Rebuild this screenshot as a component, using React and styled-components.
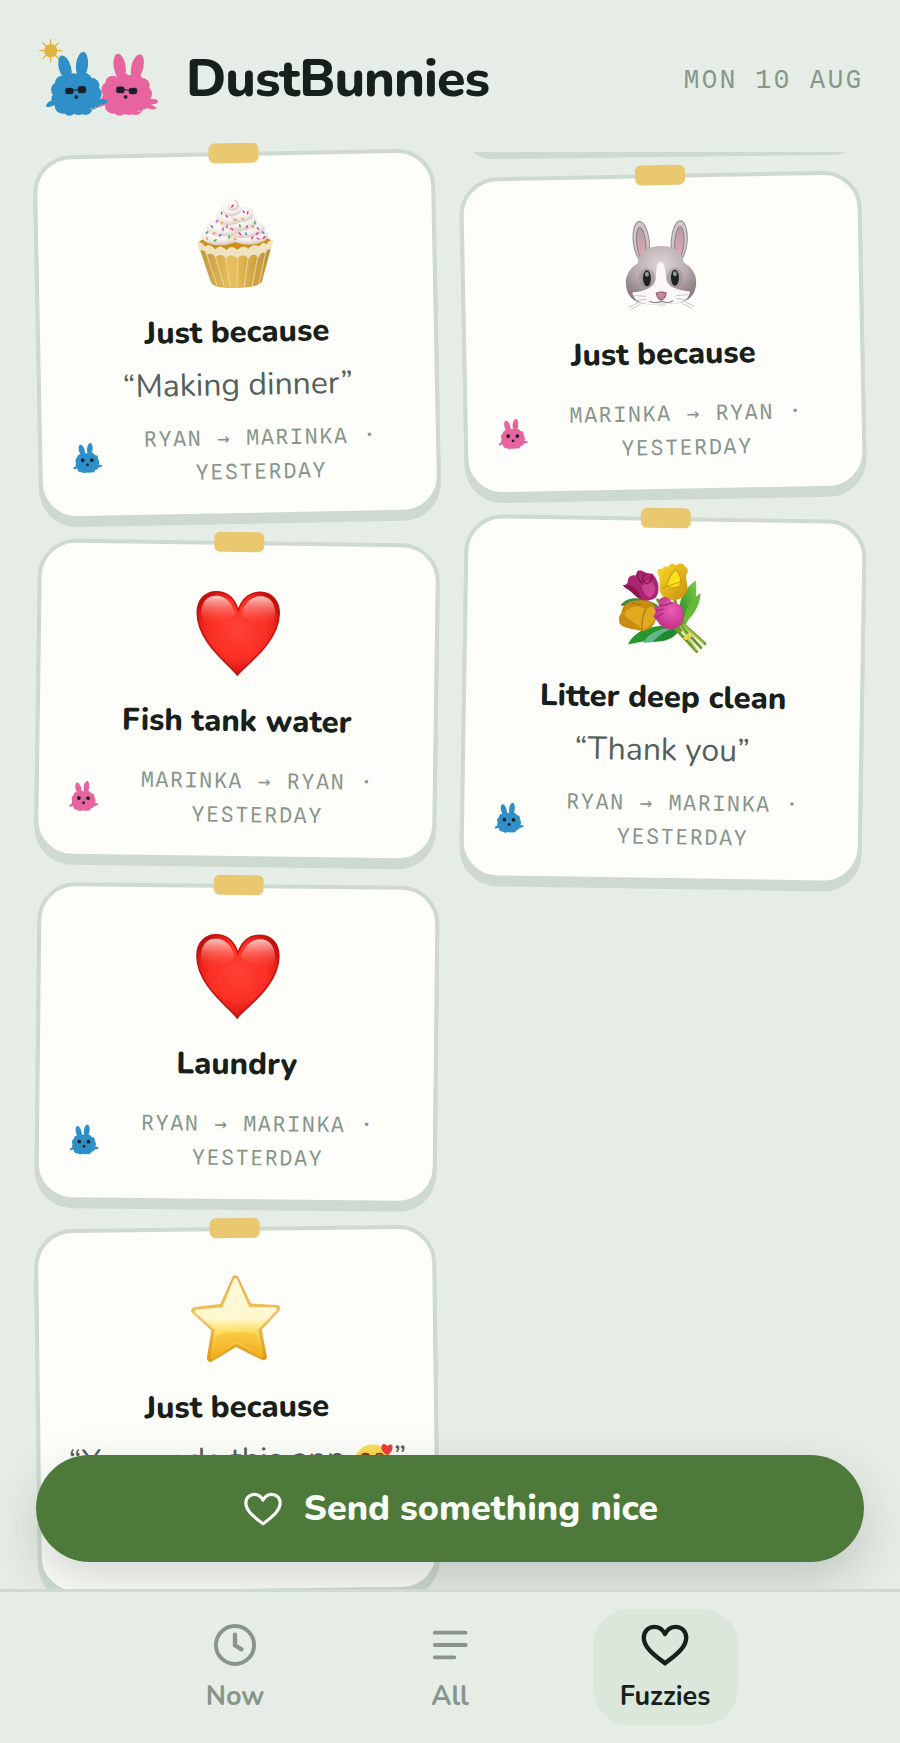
import React from 'react';
import styled, { createGlobalStyle } from 'styled-components';


const GlobalStyle = createGlobalStyle`
  * {
    box-sizing: border-box;
  }

  body {
    margin: 0;
    background-color: #e6ede6;
    color: #18201b;
    font-family: "Nunito", "Lato", sans-serif;
  }
`;

const Shell = styled.div`
  height: 100vh;
  display: flex;
  flex-direction: column;
  overflow: hidden;
`;

const Header = styled.header`
  display: flex;
  align-items: center;
  gap: 28px;
  padding: 39px 36px 17px;
`;

const Logo = styled.svg`
  width: 122px;
  height: 80px;
  flex: none;
`;

const Brand = styled.h1`
  margin: 0;
  flex: 1;
  font-size: 52px;
  line-height: 64px;
  font-weight: 800;
  letter-spacing: -1px;
`;

const Today = styled.time`
  font-family: "Spline Sans Mono", "Roboto Mono", "DejaVu Sans Mono", monospace;
  font-size: 25px;
  line-height: 34px;
  letter-spacing: 3px;
  text-transform: uppercase;
  color: #87958b;
`;

const Stage = styled.main`
  position: relative;
  flex: 1;
  min-height: 0;
  overflow: hidden;
`;

const Board = styled.div`
  height: 100%;
  padding: 16px 36px 0;
  display: grid;
  grid-template-columns: 1fr 1fr;
  align-items: start;
  gap: 24px;
`;

const Column = styled.div`
  min-width: 0;
  display: flex;
  flex-direction: column;
  gap: 24px;
`;

const Card = styled.article`
  position: relative;
  padding: 42px 28px 24px;
  border: 4px solid #cedad0;
  border-radius: 38px;
  background-color: #fdfefa;
  box-shadow: 0 7px 0 #cedad0;
  text-align: center;
  transform: rotate(${(props) => props.$tilt}deg);
`;

const Tape = styled.span`
  position: absolute;
  top: -13px;
  left: 50%;
  width: 50px;
  height: 20px;
  margin-left: -25px;
  border-radius: 6px;
  background-color: #e9c870;
`;

const Carry = styled.div`
  height: 8px;
  margin-bottom: -10px;
  overflow: hidden;

  &::before {
    content: '';
    display: block;
    height: 80px;
    margin-top: -75px;
    border-radius: 30px;
    background-color: #cedad0;
    transform: rotate(-0.7deg);
  }
`;

const Sticker = styled.svg`
  display: block;
  width: 92px;
  height: 92px;
  margin: 0 auto 22px;
  overflow: visible;
`;

const Title = styled.h2`
  margin: 0 0 16px;
  font-size: 31px;
  line-height: 40px;
  font-weight: 800;
`;

const Quote = styled.p`
  margin: 0 0 12px;
  font-size: 32px;
  line-height: 34px;
  white-space: nowrap;
  color: #56605a;
`;

const Meta = styled.div`
  display: flex;
  align-items: center;
  gap: 10px;
  margin-top: 23px;

  ${Quote} + & {
    margin-top: 19px;
  }
`;

const Avatar = styled.svg`
  width: 34px;
  height: 34px;
  flex: none;
`;

const MetaText = styled.p`
  margin: 0;
  flex: 1;
  font-family: "Spline Sans Mono", "Roboto Mono", "DejaVu Sans Mono", monospace;
  font-size: 21px;
  line-height: 34px;
  letter-spacing: 2px;
  text-transform: uppercase;
  color: #87958b;
`;

const InlineFace = styled.svg`
  width: 40px;
  height: 40px;
  margin: -6px 0;
  vertical-align: -8px;
`;

const SendButton = styled.button`
  position: absolute;
  left: 36px;
  right: 36px;
  bottom: 27px;
  height: 107px;
  display: flex;
  align-items: center;
  justify-content: center;
  gap: 20px;
  border: 0;
  border-radius: 54px;
  background-color: #4d7a3a;
  color: #fafdf6;
  font-family: inherit;
  font-size: 36px;
  line-height: 48px;
  font-weight: 800;
  cursor: pointer;
  box-shadow: 0 18px 48px rgba(24, 32, 27, 0.18);
`;

const SendIcon = styled.svg`
  width: 42px;
  height: 42px;
`;

const Nav = styled.nav`
  position: relative;
  display: flex;
  justify-content: center;
  gap: 70px;
  padding: 17px 36px 18px;
  border-top: 3px solid #cfdbd1;
  background-color: #e6ede6;
`;

const Tab = styled.a`
  width: 145px;
  height: 116px;
  padding-top: 10px;
  display: flex;
  flex-direction: column;
  align-items: center;
  gap: 9px;
  border-radius: 36px;
  background-color: ${(props) => (props.$active ? '#dbe7da' : 'transparent')};
  color: ${(props) => (props.$active ? '#18201b' : '#87958b')};
  font-size: 27px;
  line-height: 34px;
  font-weight: 700;
  text-decoration: none;
`;

const TabIcon = styled.svg`
  width: 52px;
  height: 52px;
  fill: none;
  stroke: currentColor;
  stroke-width: 2;
  stroke-linecap: round;
  stroke-linejoin: round;
`;

const BLUE = '#2f8fc9';
const PINK = '#e8649f';

const FLUFF = [
  [139, 192, 58], [86, 176, 23], [97, 156, 22], [130, 150, 23], [164, 148, 22], [186, 163, 22],
  [193, 188, 22], [186, 214, 22], [166, 231, 21], [146, 228, 24], [118, 234, 20], [98, 224, 24], [84, 203, 20],
];

const EARS = {
  upright: [[105, 111, -16], [156, 102, 6]],
  spread: [[118, 107, -9], [171, 108, 14]],
};

function BunnyShape({ color, ears = 'upright' }) {
  return (
    <g fill={color}>
      {EARS[ears].map(([x, y, turn]) => (
        <ellipse key={x} cx={x} cy={y} rx="18" ry="39" transform={`rotate(${turn} ${x} ${y})`} />
      ))}
      {FLUFF.map(([x, y, r]) => (
        <circle key={`${x}-${y}`} cx={x} cy={y} r={r} />
      ))}
      <path d="M75 208 Q56 208 49 221 Q46 230 58 228 L82 220Z" />
      <path d="M198 200 L230 206 Q238 213 226 218 L196 224Z" />
    </g>
  );
}

function Mascots() {
  return (
    <Logo viewBox="18 24 366 240" role="img" aria-label="Two dust bunnies">
      <g stroke="#e3b341" strokeWidth="4" strokeLinecap="round">
        {[0, 45, 90, 135, 180, 225, 270, 315].map((turn) => (
          <path key={turn} d="M62 38V26" transform={`rotate(${turn} 62 59)`} />
        ))}
      </g>
      <circle cx="62" cy="59" r="20" fill="#e3b341" />
      <g transform="translate(151 0)">
        <BunnyShape color={PINK} ears="spread" />
        <path d="M200 214 L229 230 Q226 237 212 234 L190 230Z" fill={PINK} />
      </g>
      <BunnyShape color={BLUE} />
      <g fill="#172029" stroke="#172029">
        <rect x="106" y="171" width="24" height="18" rx="6" />
        <rect x="144" y="166" width="24" height="20" rx="6" />
        <path d="M126 178L148 176" strokeWidth="3" />
        <rect x="259" y="167" width="24" height="19" rx="6" />
        <rect x="297" y="171" width="24" height="18" rx="6" />
        <path d="M280 175L300 179" strokeWidth="3" />
        <circle cx="139" cy="198" r="5" />
        <circle cx="287" cy="198" r="5" />
      </g>
      <g stroke="#e6ede6" strokeWidth="2" strokeLinecap="round">
        <path d="M181 233l8 1M194 231l3 -3M323 239l8 2M337 241h8" />
      </g>
    </Logo>
  );
}

function BunnyAvatar({ color }) {
  return (
    <Avatar viewBox="31 50 216 216" aria-hidden="true">
      <BunnyShape color={color} />
      <circle cx="109" cy="172" r="12" fill="#15202a" />
      <circle cx="167" cy="172" r="12" fill="#15202a" />
      <circle cx="139" cy="202" r="9" fill="#15202a" />
    </Avatar>
  );
}

const SPRINKLES = [
  [44, 8, '#d8366a', 40], [33, 15, '#3aa757', 0], [38, 18, '#e0457b', -50], [55, 14, '#d8468a', -30],
  [59, 15, '#e0457b', 10], [28, 23, '#d858a8', 40], [33, 25, '#e2a13c', 30], [23, 28, '#3b8ad8', -40],
  [38, 28, '#d858a8', 20], [46, 22, '#e2a13c', 60], [54, 21, '#e2a13c', -50], [51, 28, '#3aa757', -10],
  [34, 31, '#e0457b', 10], [43, 31, '#e0457b', -50], [18, 34, '#3aa757', 50], [25, 35, '#e2a13c', 40],
  [31, 37, '#8a63d2', 50], [40, 39, '#3aa757', 15], [46, 41, '#e2a13c', -60], [26, 42, '#3aa757', 60],
  [51, 36, '#d8366a', -40], [57, 36, '#3b8ad8', -30], [58, 29, '#e0457b', 20], [64, 29, '#e2a13c', -30],
  [66, 25, '#3aa757', 0], [69, 31, '#d858a8', -40], [68, 36, '#e0457b', 45], [74, 35, '#3b8ad8', -50],
  [63, 40, '#e0457b', 30], [69, 41, '#d858a8', -60], [75, 40, '#d8366a', 40], [18, 40, '#e2a13c', -30],
];

const SWIRLS = [
  [32, 37, 20, 10], [60, 38, 19, 9], [53, 31, 23, 9], [36, 29, 19, 9],
  [50, 24, 18, 9], [41, 18, 14, 9], [53, 16, 12, 8], [43, 11, 10, 7], [45, 7, 6, 5],
];

function Cupcake() {
  return (
    <Sticker viewBox="0 0 92 92" role="img" aria-label="Cupcake">
      <defs>
        <linearGradient id="cake-cup" x1="0" x2="1">
          <stop offset="0" stopColor="#c1953a" />
          <stop offset="0.45" stopColor="#e8c05c" />
          <stop offset="1" stopColor="#bb8c30" />
        </linearGradient>
        <radialGradient id="cake-cream" cx="0.45" cy="0.3" r="0.75">
          <stop offset="0" stopColor="#ffffff" />
          <stop offset="0.6" stopColor="#f5efec" />
          <stop offset="1" stopColor="#cfc1ba" />
        </radialGradient>
      </defs>
      <ellipse cx="46" cy="45" rx="37" ry="9" fill="#cf8e14" />
      <path d="M9 46 L21 84 Q24 90 46 90 Q68 90 72 84 L83 46 Q46 58 9 46Z" fill="url(#cake-cup)" />
      <path d="M8 44 Q12 42 16 48 Q20 44 26 51 Q31 45 37 52 Q42 46 48 52 Q54 46 59 51 Q65 45 70 49 Q74 43 77 47 Q80 42 84 43 L82 52 Q78 51 76 56 Q72 53 69 60 Q64 53 59 61 Q53 54 48 61 Q41 54 37 60 Q31 54 26 59 Q22 53 18 56 Q15 50 10 52Z" fill="#efe3c4" />
      <g stroke="#eddcae" strokeWidth="1.2" opacity="0.75">
        <path d="M16 52L27 87M25 55L34 88M36 57L40 89M48 58L47 89M59 57L54 89M69 55L62 88M77 51L69 86" />
      </g>
      {SWIRLS.map(([x, y, rx, ry]) => (
        <ellipse key={`${x}-${y}`} cx={x} cy={y} rx={rx} ry={ry} fill="url(#cake-cream)" />
      ))}
      <path d="M46 2Q51 5 48 10Q44 13 40 11" fill="none" stroke="#d7cbc6" strokeWidth="1.2" />
      <g strokeWidth="1.5" strokeLinecap="round">
        {SPRINKLES.map(([x, y, color, turn]) => (
          <path key={`${x}-${y}`} d={`M${x} ${y - 1}v2`} stroke={color} transform={`rotate(${turn} ${x} ${y})`} />
        ))}
      </g>
    </Sticker>
  );
}

function RedHeart() {
  return (
    <Sticker viewBox="0 0 92 92" role="img" aria-label="Red heart">
      <defs>
        <radialGradient id="love-fill" cx="0.5" cy="0.45" r="0.58">
          <stop offset="0" stopColor="#ff4236" />
          <stop offset="0.6" stopColor="#fb2f25" />
          <stop offset="0.85" stopColor="#e01b16" />
          <stop offset="1" stopColor="#ac0d0b" />
        </radialGradient>
        <linearGradient id="love-shine" x1="0" y1="0" x2="0" y2="1">
          <stop offset="0" stopColor="#ffded9" stopOpacity="0.9" />
          <stop offset="1" stopColor="#ff4a3e" stopOpacity="0" />
        </linearGradient>
      </defs>
      <path d="M46 88 C40 79 5 56 5 26 C5 13 13 5 24 5 C34 5 42 11 46 23 C50 11 58 5 68 5 C79 5 87 13 87 26 C87 56 52 79 46 88Z" fill="url(#love-fill)" stroke="#c3130f" strokeWidth="1.5" />
      <path d="M9 27 C9 15 15 9 24 9 C33 9 40 16 43 27 C36 34 20 38 11 38Z" fill="url(#love-shine)" />
      <path d="M83 27 C83 15 77 9 68 9 C59 9 52 16 49 27 C56 34 72 38 81 38Z" fill="url(#love-shine)" />
    </Sticker>
  );
}

function RabbitFace() {
  return (
    <Sticker viewBox="0 0 92 92" role="img" aria-label="Rabbit face">
      <defs>
        <radialGradient id="rabbit-fur" cx="0.5" cy="0.3" r="0.65">
          <stop offset="0" stopColor="#ddd5d6" />
          <stop offset="0.6" stopColor="#b9acae" />
          <stop offset="1" stopColor="#8b7f82" />
        </radialGradient>
        <linearGradient id="rabbit-ear" x1="0" y1="0" x2="0" y2="1">
          <stop offset="0" stopColor="#b59da3" />
          <stop offset="1" stopColor="#e3a9b3" />
        </linearGradient>
      </defs>
      <ellipse cx="26" cy="21" rx="8" ry="20" fill="#cfc6c7" stroke="#948a8c" transform="rotate(-5 26 21)" />
      <ellipse cx="64" cy="21" rx="8" ry="20" fill="#cfc6c7" stroke="#948a8c" transform="rotate(5 64 21)" />
      <ellipse cx="26" cy="23" rx="4.5" ry="16" fill="url(#rabbit-ear)" stroke="#8f7d82" transform="rotate(-5 26 23)" />
      <ellipse cx="64" cy="23" rx="4.5" ry="16" fill="url(#rabbit-ear)" stroke="#8f7d82" transform="rotate(5 64 23)" />
      <path d="M45 26 C57 26 67 31 68 43 C77 48 81 56 80 65 C79 78 69 84 56 84 L34 84 C21 84 11 78 10 65 C9 56 13 48 22 43 C23 31 33 26 45 26Z" fill="url(#rabbit-fur)" />
      <path d="M45 42 C49 42 50 51 50 58 C51 67 62 71 74 72 C72 81 65 84 56 84 L34 84 C25 84 18 81 16 72 C28 71 39 67 40 58 C40 51 41 42 45 42Z" fill="#faf8f6" />
      <ellipse cx="31" cy="58" rx="8" ry="10" fill="#8b7e80" opacity="0.4" />
      <ellipse cx="59" cy="58" rx="8" ry="10" fill="#8b7e80" opacity="0.4" />
      <ellipse cx="31" cy="58" rx="4" ry="8" fill="#1d2423" />
      <ellipse cx="59" cy="58" rx="4" ry="8" fill="#1d2423" />
      <ellipse cx="31" cy="54" rx="2" ry="2.5" fill="#8d9996" />
      <ellipse cx="59" cy="54" rx="2" ry="2.5" fill="#8d9996" />
      <rect x="40" y="81" width="10" height="5" rx="2.5" fill="#e6e4e1" />
      <path d="M40 73 Q45 71 50 73 Q49 79 45 80 Q41 79 40 73Z" fill="#c98795" stroke="#8d5764" />
      <path d="M45 80V81 M45 81Q39 84 33 81 M45 81Q51 84 57 81" fill="none" stroke="#8d7b7d" />
      <path d="M30 76L18 75M30 79L18 80M24 84L14 89M22 82L12 87M60 76L72 75M60 79L72 80M66 84L76 89M68 82L78 87" stroke="#bdb5b5" strokeWidth="0.8" />
    </Sticker>
  );
}

function Bouquet() {
  return (
    <Sticker viewBox="1 3 92 92" role="img" aria-label="Bouquet">
      <defs>
        <linearGradient id="leaf" x1="0" y1="1" x2="1" y2="0">
          <stop offset="0" stopColor="#1d7f2b" />
          <stop offset="1" stopColor="#7ed03c" />
        </linearGradient>
        <radialGradient id="pink-bud" cx="0.6" cy="0.4" r="0.7">
          <stop offset="0" stopColor="#ec5cba" />
          <stop offset="1" stopColor="#b92b7c" />
        </radialGradient>
        <linearGradient id="gold-bud" x1="0" y1="0" x2="1" y2="1">
          <stop offset="0" stopColor="#f9dc2d" />
          <stop offset="1" stopColor="#c98d0d" />
        </linearGradient>
      </defs>
      <path d="M78 20 C67 28 61 40 61 54 L66 66 C76 55 80 42 78 20Z" fill="url(#leaf)" />
      <path d="M83 33 C74 37 66 52 66 64 C76 56 82 46 83 33Z" fill="#66bb36" />
      <path d="M3 46 C10 36 24 37 40 45 L42 50 C25 46 12 48 3 46Z" fill="#3f8b45" />
      <path d="M11 85 C18 70 35 64 58 66 C46 79 28 81 11 85Z" fill="#27962e" />
      <path d="M26 83 C32 72 46 67 62 67 C54 79 40 83 26 83Z" fill="#63b68a" />
      <path d="M36 82 C44 73 52 68 63 67 C60 77 50 82 36 82Z" fill="#1f8a31" />
      <path d="M57 38 L63 66M40 40 L64 70M52 62L80 91M62 64L84 87M64 62L88 83" fill="none" stroke="#6d9a28" strokeWidth="3" strokeLinecap="round" />
      <path d="M63 66L80 90M66 64L87 83" stroke="#a9c844" strokeWidth="1.5" />
      <path d="M66 78L72 72L75 76L69 80Z" fill="#f2d33c" />
      <path d="M40 14 Q38 8 44 9 Q46 5 50 7 Q53 1 57 5 Q64 1 67 6 Q72 10 68 15 C68 22 73 30 66 36 C59 43 47 41 43 33 C40 26 44 19 40 14Z" fill="url(#gold-bud)" />
      <path d="M58 9 C62 14 64 20 62 25 Q55 28 49 25 C51 18 53 13 58 9Z" fill="#ffe11c" />
      <path d="M44 28 C52 25 60 24 68 18 M58 9 C53 13 51 18 49 25 M58 9 C62 14 64 20 62 25" fill="none" stroke="#c99b0b" strokeWidth="1.1" />
      <path d="M5 26 Q11 25 10 20 Q12 15 18 16 Q19 9 24 11 Q29 14 34 14 C41 19 43 32 38 38 C30 44 19 40 16 32 Q9 31 5 26Z" fill="#ab2670" />
      <path d="M5 26 C15 24 21 29 24 40 C18 38 15 33 5 26Z" fill="#8d164f" />
      <path d="M24 25 Q30 18 35 23 Q41 32 32 38 Q25 34 24 25Z" fill="#cc4392" />
      <path d="M20 12 C18 18 22 22 26 25 M27 14 C23 18 24 22 29 24 C33 23 35 18 34 14" fill="none" stroke="#7d1449" strokeWidth="1.2" />
      <path d="M4 54 C4 46 12 40 22 41 C32 39 41 46 39 56 C39 66 30 73 22 71 C15 69 2 69 2 62 Q1 57 4 54Z" fill="#c88d10" />
      <path d="M7 54 C12 46 22 45 28 50 Q34 45 39 48 C42 57 34 68 25 70 C19 62 11 62 7 54Z" fill="#e0a91f" />
      <path d="M25 70 Q24 60 28 50 M14 43 Q18 45 24 45" fill="none" stroke="#a9750d" strokeWidth="1.2" />
      <path d="M39 51 L36 48 L42 46 C38 37 50 33 54 42 C66 43 69 54 65 62 C59 72 46 71 41 62 L36 57Z" fill="url(#pink-bud)" />
      <path d="M41 45 C48 47 52 44 55 42 M38 51L47 49M40 57L46 53" fill="none" stroke="#a02970" strokeWidth="1.2" />
    </Sticker>
  );
}

function GoldStar() {
  return (
    <Sticker viewBox="0 0 92 92" role="img" aria-label="Star">
      <defs>
        <linearGradient id="star-fill" x1="0" y1="0" x2="0" y2="1">
          <stop offset="0" stopColor="#fff8dc" />
          <stop offset="0.5" stopColor="#fff8cf" />
          <stop offset="0.68" stopColor="#fcdc5a" />
          <stop offset="1" stopColor="#f2ab20" />
        </linearGradient>
        <linearGradient id="star-edge" x1="0" y1="0" x2="0" y2="1">
          <stop offset="0" stopColor="#ecae48" />
          <stop offset="0.5" stopColor="#f1c261" />
          <stop offset="1" stopColor="#dc9b17" />
        </linearGradient>
      </defs>
      <path d="M46 6 L59 34 L87 36 L68 56 L73 84 L46 70 L20 85 L25 56 L5 37 L33 34Z" fill="url(#star-edge)" stroke="url(#star-edge)" strokeWidth="7" strokeLinejoin="round" />
      <path d="M46 7 L58 36 L85 37 L66 56 L71 83 L46 68 L22 84 L27 56 L7 38 L34 36Z" fill="url(#star-fill)" stroke="url(#star-fill)" strokeWidth="4" strokeLinejoin="round" />
      <path d="M27 62 Q46 56 66 61 L71 83 L46 68 L22 84Z" fill="#f3b01f" opacity="0.35" />
    </Sticker>
  );
}

function SmilingFace() {
  return (
    <InlineFace viewBox="0 0 40 40" role="img" aria-label="Smiling face with hearts">
      <defs>
        <linearGradient id="face-fill" x1="0" y1="0" x2="0" y2="1">
          <stop offset="0" stopColor="#fde263" />
          <stop offset="1" stopColor="#f5a623" />
        </linearGradient>
      </defs>
      <circle cx="19" cy="20" r="18" fill="url(#face-fill)" />
      <path d="M7 14q3 -4 8 -2M23 12q5 -2 7 2M9 21q4 -5 8 0M22 21q4 -5 8 0M11 27q8 8 16 0" fill="none" stroke="#6b3f10" strokeWidth="1.8" strokeLinecap="round" />
      <path d="M34 13 C30 11 27 7 28 4 C29 1 32 1 34 4 C36 1 40 2 39 6 C39 9 36 12 34 13Z" fill="#ee3d3d" />
      <path d="M8 37 C4 34 2 31 3 28 C5 26 7 27 8 29 C10 26 13 27 13 30 C13 33 11 35 8 37Z" fill="#ee3d3d" />
    </InlineFace>
  );
}

const HEART_PATH = 'M12 20.5 C8.5 17.6 2.2 13.6 2.2 8.6 C2.2 5.6 4.5 3.6 7 3.6 C9.2 3.6 11 4.9 12 6.9 C13 4.9 14.8 3.6 17 3.6 C19.5 3.6 21.8 5.6 21.8 8.6 C21.8 13.6 15.5 17.6 12 20.5Z';

const leftNotes = [
  { id: 1, tilt: -1.1, sticker: <Cupcake />, title: 'Just because', quote: 'Making dinner', from: 'Ryan', to: 'Marinka', color: BLUE },
  { id: 2, tilt: 0.8, sticker: <RedHeart />, title: 'Fish tank water', from: 'Marinka', to: 'Ryan', color: PINK },
  { id: 3, tilt: 0.6, sticker: <RedHeart />, title: 'Laundry', from: 'Ryan', to: 'Marinka', color: BLUE },
  { id: 4, tilt: -0.7, sticker: <GoldStar />, title: 'Just because', quote: <>You made this app <SmilingFace /></>, from: 'Ryan', to: 'Marinka', color: BLUE },
];

const rightNotes = [
  { id: 5, tilt: -1.1, sticker: <RabbitFace />, title: 'Just because', from: 'Marinka', to: 'Ryan', color: PINK },
  { id: 6, tilt: 0.9, sticker: <Bouquet />, title: 'Litter deep clean', quote: 'Thank you', from: 'Ryan', to: 'Marinka', color: BLUE },
];

function Note({ note }) {
  return (
    <Card $tilt={note.tilt}>
      <Tape />
      {note.sticker}
      <Title>{note.title}</Title>
      {note.quote && <Quote>“{note.quote}”</Quote>}
      <Meta>
        <BunnyAvatar color={note.color} />
        <MetaText>{note.from} → {note.to} · Yesterday</MetaText>
      </Meta>
    </Card>
  );
}


function App() {
  return (
    <Shell>
      <GlobalStyle />
      <Header>
        <Mascots />
        <Brand>DustBunnies</Brand>
        <Today>Mon 10 Aug</Today>
      </Header>
      <Stage>
        <Board>
          <Column>
            {leftNotes.map((note) => <Note key={note.id} note={note} />)}
          </Column>
          <Column>
            <Carry />
            {rightNotes.map((note) => <Note key={note.id} note={note} />)}
          </Column>
        </Board>
        <SendButton type="button">
          <SendIcon viewBox="0 0 24 24" fill="none" stroke="currentColor" strokeWidth="1.8" strokeLinejoin="round" aria-hidden="true">
            <path d={HEART_PATH} />
          </SendIcon>
          Send something nice
        </SendButton>
      </Stage>
      <Nav>
        <Tab href="#now">
          <TabIcon viewBox="0 0 24 24" aria-hidden="true">
            <circle cx="12" cy="12" r="8.8" strokeWidth="1.8" />
            <path d="M12 7.2V12.2L15 14" />
          </TabIcon>
          Now
        </Tab>
        <Tab href="#all">
          <TabIcon viewBox="0 0 24 24" aria-hidden="true">
            <path d="M5 6.3H19.2M5 12H19.2M5 17.7H14" strokeWidth="1.8" />
          </TabIcon>
          All
        </Tab>
        <Tab href="#fuzzies" $active aria-current="page">
          <TabIcon viewBox="0 0 24 24" aria-hidden="true">
            <path d={HEART_PATH} />
          </TabIcon>
          Fuzzies
        </Tab>
      </Nav>
    </Shell>
  );
}

export default App
